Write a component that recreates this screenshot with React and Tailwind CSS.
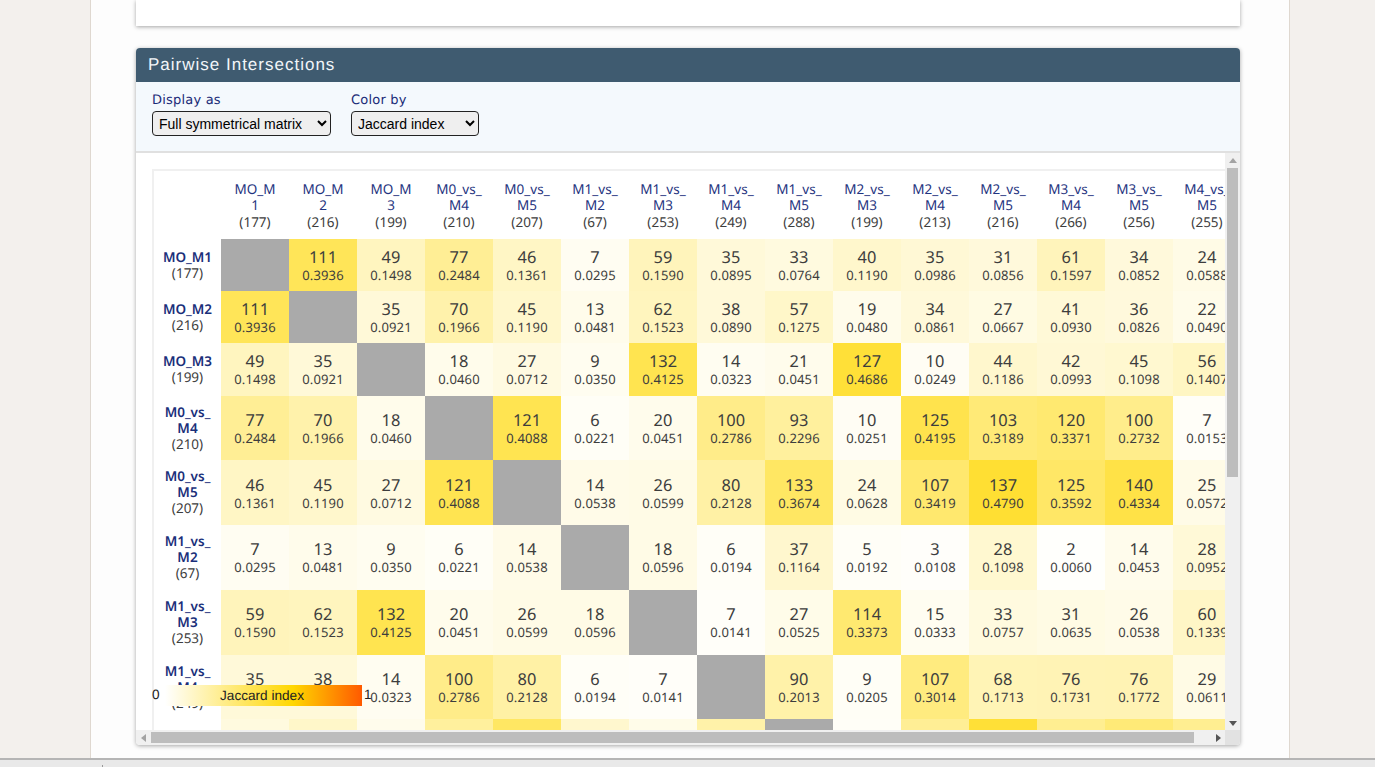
const FONT = "font-['Noto_Sans',sans-serif]"

const names = ['MO_M1', 'MO_M2', 'MO_M3', 'M0_vs_M4', 'M0_vs_M5', 'M1_vs_M2', 'M1_vs_M3', 'M1_vs_M4', 'M1_vs_M5', 'M2_vs_M3', 'M2_vs_M4', 'M2_vs_M5', 'M3_vs_M4', 'M3_vs_M5', 'M4_vs_M5']
const colHead = [['MO_M', '1'], ['MO_M', '2'], ['MO_M', '3'], ['M0_vs_', 'M4'], ['M0_vs_', 'M5'], ['M1_vs_', 'M2'], ['M1_vs_', 'M3'], ['M1_vs_', 'M4'], ['M1_vs_', 'M5'], ['M2_vs_', 'M3'], ['M2_vs_', 'M4'], ['M2_vs_', 'M5'], ['M3_vs_', 'M4'], ['M3_vs_', 'M5'], ['M4_vs_', 'M5']]
const sizes = [177, 216, 199, 210, 207, 67, 253, 249, 288, 199, 213, 216, 266, 256, 255]
const rowHeights = [52, 52, 53, 64, 65, 65, 65, 64, 65]
const nudged = [2, 5, 6]

// [count, jaccard], null on the diagonal
const rows = [
  [null, [111, '0.3936'], [49, '0.1498'], [77, '0.2484'], [46, '0.1361'], [7, '0.0295'], [59, '0.1590'], [35, '0.0895'], [33, '0.0764'], [40, '0.1190'], [35, '0.0986'], [31, '0.0856'], [61, '0.1597'], [34, '0.0852'], [24, '0.0588']],
  [[111, '0.3936'], null, [35, '0.0921'], [70, '0.1966'], [45, '0.1190'], [13, '0.0481'], [62, '0.1523'], [38, '0.0890'], [57, '0.1275'], [19, '0.0480'], [34, '0.0861'], [27, '0.0667'], [41, '0.0930'], [36, '0.0826'], [22, '0.0490']],
  [[49, '0.1498'], [35, '0.0921'], null, [18, '0.0460'], [27, '0.0712'], [9, '0.0350'], [132, '0.4125'], [14, '0.0323'], [21, '0.0451'], [127, '0.4686'], [10, '0.0249'], [44, '0.1186'], [42, '0.0993'], [45, '0.1098'], [56, '0.1407']],
  [[77, '0.2484'], [70, '0.1966'], [18, '0.0460'], null, [121, '0.4088'], [6, '0.0221'], [20, '0.0451'], [100, '0.2786'], [93, '0.2296'], [10, '0.0251'], [125, '0.4195'], [103, '0.3189'], [120, '0.3371'], [100, '0.2732'], [7, '0.0153']],
  [[46, '0.1361'], [45, '0.1190'], [27, '0.0712'], [121, '0.4088'], null, [14, '0.0538'], [26, '0.0599'], [80, '0.2128'], [133, '0.3674'], [24, '0.0628'], [107, '0.3419'], [137, '0.4790'], [125, '0.3592'], [140, '0.4334'], [25, '0.0572']],
  [[7, '0.0295'], [13, '0.0481'], [9, '0.0350'], [6, '0.0221'], [14, '0.0538'], null, [18, '0.0596'], [6, '0.0194'], [37, '0.1164'], [5, '0.0192'], [3, '0.0108'], [28, '0.1098'], [2, '0.0060'], [14, '0.0453'], [28, '0.0952']],
  [[59, '0.1590'], [62, '0.1523'], [132, '0.4125'], [20, '0.0451'], [26, '0.0599'], [18, '0.0596'], null, [7, '0.0141'], [27, '0.0525'], [114, '0.3373'], [15, '0.0333'], [33, '0.0757'], [31, '0.0635'], [26, '0.0538'], [60, '0.1339']],
  [[35, '0.0895'], [38, '0.0890'], [14, '0.0323'], [100, '0.2786'], [80, '0.2128'], [6, '0.0194'], [7, '0.0141'], null, [90, '0.2013'], [9, '0.0205'], [107, '0.3014'], [68, '0.1713'], [76, '0.1731'], [76, '0.1772'], [29, '0.0611']],
]

// the next row only peeks out below the fold, its right part is just colour
const peekTail = [0.02, 0.25, 0.47, 0.26, 0.32, 0.26]

const cellAt = (r, c) => {
  if (r === c) return null
  if (r < rows.length) return rows[r][c]
  if (c < rows.length) return rows[c][r]
  return ['', peekTail[c - 9]]
}

const cellColor = (j) => {
  const t = Math.min(Number(j) / 0.6, 1)
  return `rgb(255, ${Math.round(255 - 40 * t)}, ${Math.round(255 - 255 * t)})`
}

function Cell({ cell, nudge }) {
  if (cell === null) return <td className="bg-[#aaaaaa] w-[68px]" />
  return (
    <td className={`w-[68px] text-center align-middle text-[#3d3d3d] ${nudge ? 'pb-[2px]' : ''}`} style={{ backgroundColor: cellColor(cell[1]) }}>
      <div className="text-[16.4px] leading-[20px]">{cell[0]}</div>
      <div className="text-[13px] leading-[16px] tracking-[0.15px]">{typeof cell[1] === 'string' ? cell[1] : ''}</div>
    </td>
  )
}

function Select({ label, value, width }) {
  return (
    <label className="block">
      <div className="text-[13px] leading-[20px] tracking-[0.2px] text-[#1a2b78] font-['DejaVu_Sans',sans-serif] h-[20px]">{label}</div>
      <select defaultValue={value} className={`${width} h-[25px] block border border-[#222222] rounded-[4px] bg-[#efefef] text-[14px] text-black pl-[2px] font-['Liberation_Sans',sans-serif]`}>
        <option>{value}</option>
      </select>
    </label>
  )
}

function Arrow({ dir, dark }) {
  const points = { up: '4,1 8,6 0,6', down: '0,2 8,2 4,7', left: '6,0 6,8 1,4', right: '2,0 2,8 7,4' }
  return (
    <svg width="8" height="8" viewBox="0 0 8 8" className="shrink-0">
      <polygon points={points[dir]} fill={dark ? '#555555' : '#a3a3a3'} />
    </svg>
  )
}

export default function App() {
  return (
    <div className="h-[767px] overflow-hidden bg-[#f3f0ed] flex flex-col [text-rendering:geometricPrecision]">
      <div className="h-[758px] shrink-0 ml-[90px] w-[1200px] border-x border-[#dfd8d0] bg-[#fdfdfd] pl-[45px] pr-[49px] overflow-hidden">
        <div className="h-[26px] bg-white shadow-[0_1px_4px_rgba(0,0,0,0.35)]" />
        <div className="mt-[22px] h-[697px] bg-white rounded-[4px] shadow-[0_1px_4px_rgba(0,0,0,0.35)] flex flex-col overflow-hidden">
          <div className="h-[34px] shrink-0 bg-[#3f5b70] text-[#f2f6f9] text-[17px] leading-[33px] tracking-[1px] pl-[12px] font-['Liberation_Sans',sans-serif]">Pairwise Intersections</div>
          <div className="h-[71px] shrink-0 bg-[#f4f9fd] border-b-2 border-[#e0e0e0] flex gap-[20px] pl-[16px] pt-[9px]">
            <Select label="Display as" value="Full symmetrical matrix" width="w-[179px]" />
            <Select label="Color by" value="Jaccard index" width="w-[128px]" />
          </div>
          <div className="relative flex-1 min-h-0 flex flex-col">
            <div className="flex-1 min-h-0 flex">
              <div className={`flex-1 min-w-0 overflow-hidden ${FONT}`}>
                <div className="w-[1108px] pt-[16px] pl-[16px]">
                  <table className="border-collapse table-fixed w-[1088px] border-t-2 border-l-2 border-[#f0f0f0]">
                    <thead>
                      <tr className="h-[69px]">
                        <th className="w-[68px]" />
                        {colHead.map((h, i) => (
                          <th key={i} className="w-[68px] font-normal text-center align-middle overflow-hidden">
                            <div className="text-[13.5px] leading-[16px] text-[#1f3480] pt-[2px]">{h[0]}</div>
                            <div className="text-[13.5px] leading-[16px] text-[#1f3480]">{h[1]}</div>
                            <div className="text-[13.5px] leading-[18px] text-[#3d3d3d]">({sizes[i]})</div>
                          </th>
                        ))}
                      </tr>
                    </thead>
                    <tbody>
                      {rowHeights.map((height, r) => (
                        <tr key={r} style={{ height }}>
                          <th className="w-[68px] text-center font-normal align-middle px-[4px]">
                            <div className="text-[13.5px] leading-[16px] font-semibold text-[#1a2f7a]">{names[r].startsWith('MO') ? names[r] : <>{names[r].slice(0, 6)}<br />{names[r].slice(6)}</>}</div>
                            <div className="text-[13.5px] leading-[17px] text-[#3d3d3d]">({sizes[r]})</div>
                          </th>
                          {names.map((_, c) => <Cell key={c} cell={cellAt(r, c)} nudge={nudged.includes(r)} />)}
                        </tr>
                      ))}
                    </tbody>
                  </table>
                </div>
              </div>
              {/* vertical scrollbar */}
              <div className="w-[15px] shrink-0 bg-[#f0f0f0] flex flex-col items-center">
                <div className="h-[15px] flex items-center justify-center"><Arrow dir="up" /></div>
                <div className="flex-1 w-full px-[2px]"><div className="h-[309px] bg-[#bdbdbd]" /></div>
                <div className="h-[15px] flex items-center justify-center"><Arrow dir="down" dark /></div>
              </div>
            </div>
            {/* horizontal scrollbar */}
            <div className="h-[15px] shrink-0 flex bg-[#f0f0f0]">
              <div className="w-[15px] flex items-center justify-center"><Arrow dir="left" /></div>
              <div className="flex-1 py-[2px]"><div className="w-[1043px] h-full bg-[#bdbdbd]" /></div>
              <div className="w-[15px] flex items-center justify-center"><Arrow dir="right" dark /></div>
              <div className="w-[15px] bg-[#e2e2e2]" />
            </div>
            {/* legend floats over the matrix */}
            <div className="absolute left-[16px] top-[532px] flex items-center h-[21px] font-['Liberation_Sans',sans-serif] text-[13.6px] text-[#222222]">
              <span className="w-[13px]">0</span>
              <div className="w-[197px] h-[21px] text-center leading-[21px] pr-[3px] bg-[linear-gradient(to_right,#ffffff,#ffd700_65%,#ff5a00)]">Jaccard index</div>
              <span className="ml-[2px]">1</span>
            </div>
          </div>
        </div>
      </div>
      <div className="flex-1 bg-[#e9e9e9] border-t-2 border-[#b5b5b5] relative">
        <div className="absolute left-[102px] top-[5px] w-px h-[4px] bg-[#999999]" />
      </div>
    </div>
  )
}
